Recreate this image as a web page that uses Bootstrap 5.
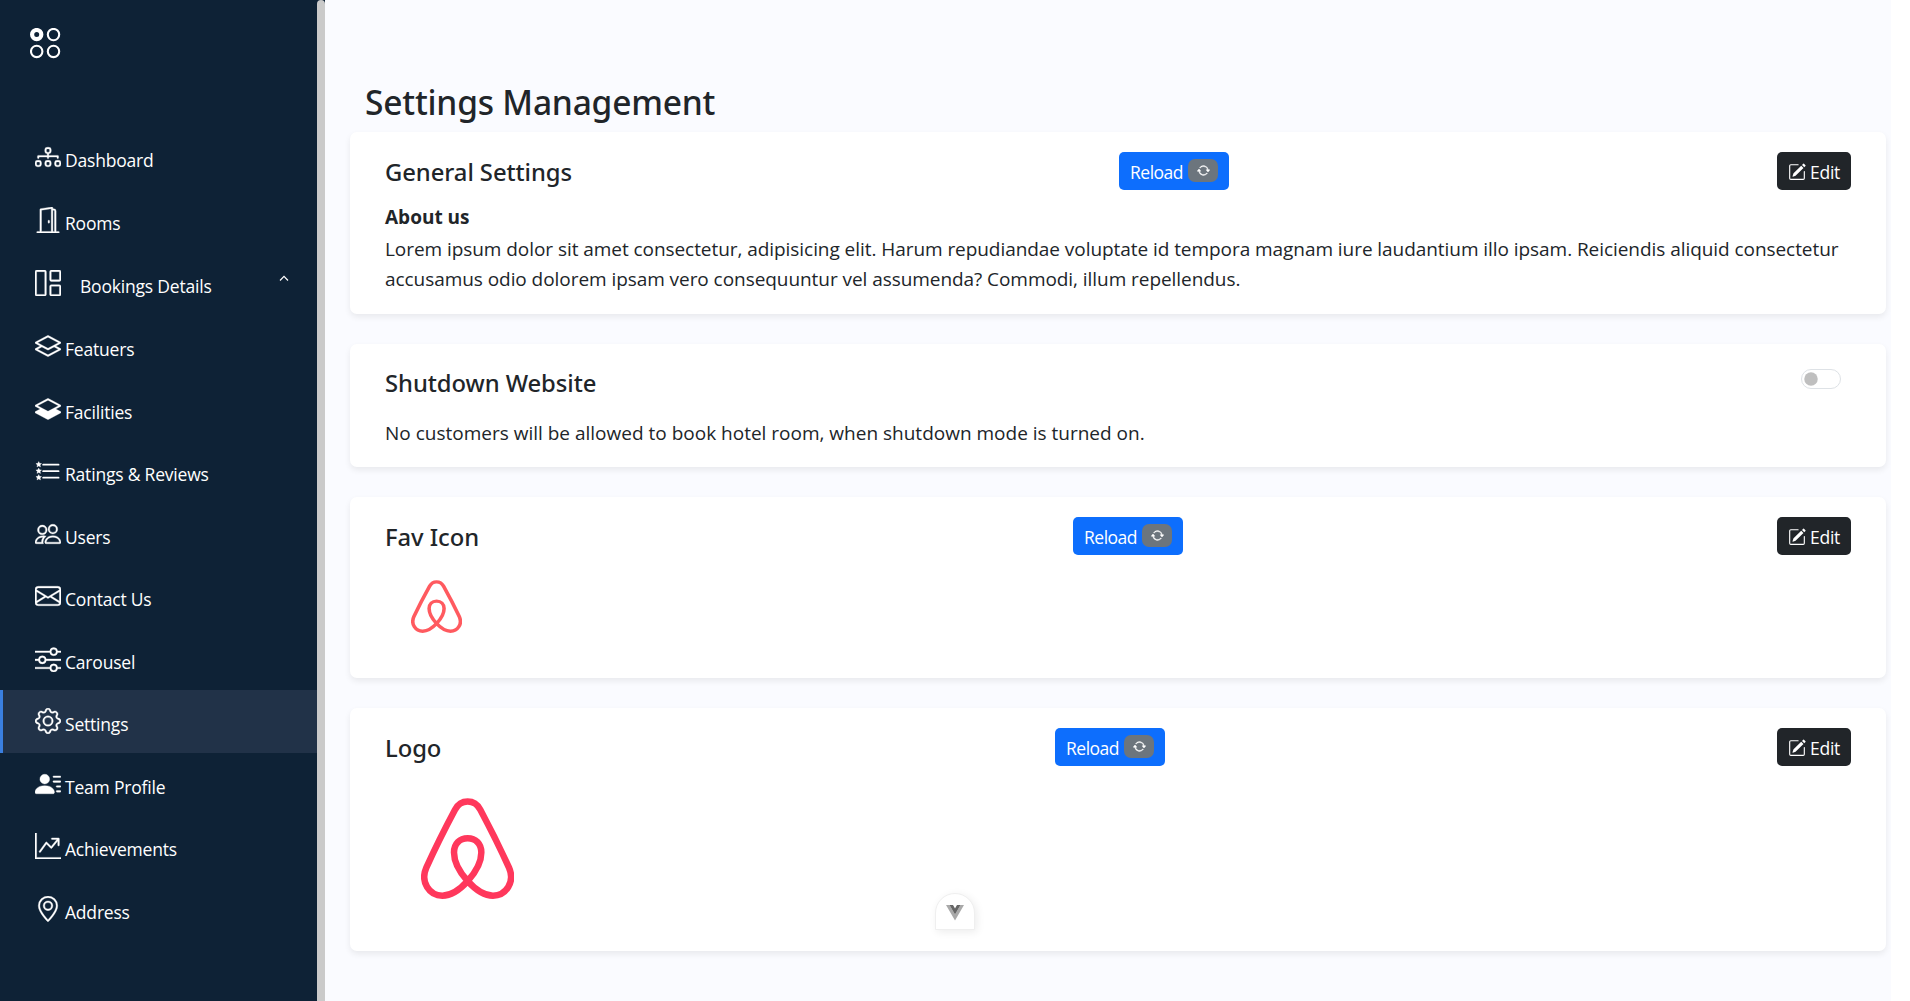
<!DOCTYPE html>
<html lang="en">
<head>
<meta charset="utf-8">
<title>Settings Management</title>
<link href="https://cdn.jsdelivr.net/npm/bootstrap@5.3.0/dist/css/bootstrap.min.css" rel="stylesheet">
<style>
body{font-family:"Open Sans","Noto Sans",sans-serif;font-size:19px;line-height:30px;color:#212529;height:1001px;overflow:hidden}
svg{display:block;flex:none}
.side-panel{width:317px;background:#0e2236}
.side-thumb{width:8px;background:#0e2236}
.side-thumb div{background:#cacaca;border-radius:4px 4px 0 0}
.side-brand{height:126px;padding:28px 0 0 30px}
.side-link{height:62.5px;padding:18.4px 0 0 35px;color:#fff;font-size:17.5px;letter-spacing:-.2px;text-decoration:none;gap:4px}
.side-link svg{stroke:currentColor;stroke-width:.2}
.side-link span{line-height:26px;padding-top:3px;white-space:nowrap}
.side-link.tall{height:64px;gap:19px;padding-top:19.4px}
.side-link.tall .caret{margin:4px 28px 0 auto;stroke-width:1.2}
.side-link.on{background:#213248;box-shadow:inset 3px 0 #3a7fdf}
.page{width:1566px;background:#fafbff;padding:82px 5px 0 25px}
h2{font:500 33.5px/40px "Noto Sans",sans-serif;letter-spacing:-.2px;margin:0 0 10px 15px}
.panel{border:0;border-radius:7px;margin-bottom:30px;padding:20px 35px;box-shadow:0 3px 6px rgba(0,0,0,.075)}
.panel h5{font:500 23.8px/38px "Noto Sans",sans-serif;letter-spacing:-.06px;margin:1px 0 0;white-space:nowrap}
.panel p{margin:0}
.w-general{width:186px}.w-fav{width:94px}.w-logo{width:58px}
.h-general{height:182px}.h-shut{height:123px}.h-fav{height:181px}.h-logo{height:243px}
.panel .btn{height:38px;font-size:17.5px;line-height:24px;padding:1px 11px 0;border:0;border-radius:5px;display:flex;align-items:center}
.btn-reload{width:110px;gap:5px;letter-spacing:-.5px}
.btn-reload .badge{width:31px;height:23px;padding:0;border-radius:7px;display:flex;align-items:center;justify-content:center}
.btn-reload svg{stroke:currentColor;stroke-width:.5}
.panel .btn-edit{width:74px;gap:4px;letter-spacing:-.25px}
.form-switch .form-check-input{width:40px;height:20px;margin:1px 2px 0 0}
.about-title{padding-top:11px}
.about-text{padding-top:2px;letter-spacing:-.057px}
.fav-art{margin:24px 0 0 26px}
.logo-art{margin:31px 0 0 36px}
.vue-tab{position:absolute;left:935px;top:893px;width:40px;height:37px;border:1px solid #efefef;border-radius:20px 20px 0 0;background:#fff;box-shadow:2px 2px 8px rgba(0,0,0,.08);padding:11px 0 0 10px}
</style>
</head>
<body class="d-flex position-relative bg-white">
<svg width="0" height="0" class="position-absolute">
<symbol id="diagram" viewBox="0 0 16 16"><path fill-rule="evenodd" d="M6 3.5A1.5 1.5 0 0 1 7.5 2h1A1.5 1.5 0 0 1 10 3.5v1A1.5 1.5 0 0 1 8.5 6v1H14a.5.5 0 0 1 .5.5v1a.5.5 0 0 1-1 0V8h-5v.5a.5.5 0 0 1-1 0V8h-5v.5a.5.5 0 0 1-1 0v-1A.5.5 0 0 1 2 7h5.500V6A1.500 1.500 0 0 1 6 4.500v-1zM8.500 5a.5.5 0 0 0 .5-.5v-1a.5.5 0 0 0-.5-.5h-1a.5.5 0 0 0-.5.5v1a.5.5 0 0 0 .5.5h1zM0 11.500A1.500 1.500 0 0 1 1.500 10h1A1.500 1.500 0 0 1 4 11.500v1A1.500 1.500 0 0 1 2.500 14h-1A1.500 1.500 0 0 1 0 12.500v-1zm1.500-.5a.5.5 0 0 0-.5.5v1a.5.5 0 0 0 .5.5h1a.5.5 0 0 0 .5-.5v-1a.5.5 0 0 0-.5-.5h-1zm4.500.5A1.500 1.500 0 0 1 7.500 10h1a1.500 1.500 0 0 1 1.500 1.500v1A1.500 1.500 0 0 1 8.500 14h-1A1.500 1.500 0 0 1 6 12.500v-1zm1.500-.5a.5.5 0 0 0-.5.5v1a.5.5 0 0 0 .5.5h1a.5.5 0 0 0 .5-.5v-1a.5.5 0 0 0-.5-.5h-1zm4.500.5a1.500 1.500 0 0 1 1.500-1.500h1a1.500 1.500 0 0 1 1.500 1.500v1a1.500 1.500 0 0 1-1.500 1.500h-1a1.500 1.500 0 0 1-1.500-1.500v-1zm1.500-.5a.5.5 0 0 0-.5.5v1a.5.5 0 0 0 .5.5h1a.5.5 0 0 0 .5-.5v-1a.5.5 0 0 0-.5-.5h-1z"/></symbol>
<symbol id="door" viewBox="0 0 16 16"><path d="M8.500 10c-.276 0-.5-.448-.5-1s.224-1 .5-1 .5.448.5 1-.224 1-.5 1z"/><path d="M10.828.122A.5.5 0 0 1 11 .5V1h.5A1.500 1.500 0 0 1 13 2.500V15h1.500a.5.5 0 0 1 0 1h-13a.5.5 0 0 1 0-1H3V1.500a.5.5 0 0 1 .43-.495l7-1a.5.5 0 0 1 .398.117zM11.500 2H11v13h1V2.500a.5.5 0 0 0-.5-.5zM4 1.934V15h6V1.077l-6 .857z"/></symbol>
<symbol id="columns" viewBox="0 0 16 16"><path d="M6 1v14H1V1h5zm9 0v5h-5V1h5zm0 9v5h-5v-5h5zM0 1v14a1 1 0 0 0 1 1h5a1 1 0 0 0 1-1V1a1 1 0 0 0-1-1H1a1 1 0 0 0-1 1zm9 0v5a1 1 0 0 0 1 1h5a1 1 0 0 0 1-1V1a1 1 0 0 0-1-1h-5a1 1 0 0 0-1 1zm1 8a1 1 0 0 0-1 1v5a1 1 0 0 0 1 1h5a1 1 0 0 0 1-1v-5a1 1 0 0 0-1-1h-5z"/></symbol>
<symbol id="layers" viewBox="0 0 16 16"><path d="M8.235 1.559a.5.5 0 0 0-.47 0l-7.500 4a.5.5 0 0 0 0 .882L3.188 8 .264 9.559a.5.5 0 0 0 0 .882l7.500 4a.5.5 0 0 0 .47 0l7.500-4a.5.5 0 0 0 0-.882L12.813 8l2.922-1.559a.5.5 0 0 0 0-.882l-7.500-4zm3.515 7.008L14.438 10 8 13.433 1.562 10 4.250 8.567l3.515 1.874a.5.5 0 0 0 .47 0l3.515-1.874zM8 9.433 1.562 6 8 2.567 14.438 6 8 9.433z"/></symbol>
<symbol id="layershalf" viewBox="0 0 16 16"><path d="M8.235 1.559a.5.5 0 0 0-.47 0l-7.500 4a.5.5 0 0 0 0 .882L3.188 8 .264 9.559a.5.5 0 0 0 0 .882l7.500 4a.5.5 0 0 0 .47 0l7.500-4a.5.5 0 0 0 0-.882L12.813 8l2.922-1.559a.5.5 0 0 0 0-.882l-7.500-4zM8 9.433 1.562 6 8 2.567 14.438 6 8 9.433z"/></symbol>
<symbol id="stars" viewBox="0 0 16 16"><path d="M5 4.100h9.500M5 8.100h9.500M5 12.100h9.500" stroke="currentColor" stroke-width="1.100" stroke-linecap="round"/><path id="st" d="M2.300 2.200l.55 1.100 1.200.15-.9.850.25 1.200-1.100-.6-1.100.6.250-1.200-.9-.850 1.200-.15z"/><use href="#st" y="4"/><use href="#st" y="8"/></symbol>
<symbol id="people" viewBox="0 0 16 16"><path d="M15 14s1 0 1-1-1-4-5-4-5 3-5 4 1 1 1 1h8zm-7.978-1A.261.261 0 0 1 7 12.996c.001-.264.167-1.030.760-1.720C8.312 10.629 9.282 10 11 10c1.717 0 2.687.630 3.240 1.276.593.690.758 1.457.760 1.720l-.008.002a.274.274 0 0 1-.014.002H7.022zM11 7a2 2 0 1 0 0-4 2 2 0 0 0 0 4zm3-2a3 3 0 1 1-6 0 3 3 0 0 1 6 0zM6.936 9.280a5.880 5.880 0 0 0-1.230-.247A7.350 7.350 0 0 0 5 9c-4 0-5 3-5 4 0 .667.333 1 1 1h4.216A2.238 2.238 0 0 1 5 13c0-1.010.377-2.042 1.090-2.904.243-.294.526-.569.846-.816zM4.920 10A5.493 5.493 0 0 0 4 13H1c0-.260.164-1.030.760-1.724.545-.636 1.492-1.256 3.160-1.275zM1.500 5.500a3 3 0 1 1 6 0 3 3 0 0 1-6 0zm3-2a2 2 0 1 0 0 4 2 2 0 0 0 0-4z"/></symbol>
<symbol id="mail" viewBox="0 0 16 16"><path d="M0 4a2 2 0 0 1 2-2h12a2 2 0 0 1 2 2v8a2 2 0 0 1-2 2H2a2 2 0 0 1-2-2V4zm2-1a1 1 0 0 0-1 1v.217l7 4.200 7-4.200V4a1 1 0 0 0-1-1H2zm13 2.383-4.708 2.825L15 11.105V5.383zm-.034 6.876-5.640-3.471L8 9.583l-1.326-.795-5.640 3.470A1 1 0 0 0 2 13h12a1 1 0 0 0 .966-.741zM1 11.105l4.708-2.897L1 5.383v5.722z"/></symbol>
<symbol id="sliders" viewBox="0 0 16 16"><path fill-rule="evenodd" d="M11.500 2a1.500 1.500 0 1 0 0 3 1.500 1.500 0 0 0 0-3zM9.050 3a2.500 2.500 0 0 1 4.900 0H16v1h-2.050a2.500 2.500 0 0 1-4.900 0H0V3h9.050zM4.500 7a1.500 1.500 0 1 0 0 3 1.500 1.500 0 0 0 0-3zM2.050 8a2.500 2.500 0 0 1 4.900 0H16v1H6.950a2.500 2.500 0 0 1-4.900 0H0V8h2.050zm9.450 4a1.500 1.500 0 1 0 0 3 1.500 1.500 0 0 0 0-3zm-2.450 1a2.500 2.500 0 0 1 4.900 0H16v1h-2.050a2.500 2.500 0 0 1-4.900 0H0v-1h9.050z"/></symbol>
<symbol id="gear" viewBox="0 0 16 16"><path d="M8 4.754a3.246 3.246 0 1 0 0 6.492 3.246 3.246 0 0 0 0-6.492zM5.754 8a2.246 2.246 0 1 1 4.492 0 2.246 2.246 0 0 1-4.492 0z"/><path d="M9.796 1.343c-.527-1.790-3.065-1.790-3.592 0l-.094.319a.873.873 0 0 1-1.255.520l-.292-.160c-1.640-.892-3.433.902-2.540 2.541l.159.292a.873.873 0 0 1-.520 1.255l-.319.094c-1.790.527-1.790 3.065 0 3.592l.319.094a.873.873 0 0 1 .520 1.255l-.160.292c-.892 1.640.901 3.434 2.541 2.540l.292-.159a.873.873 0 0 1 1.255.520l.094.319c.527 1.790 3.065 1.790 3.592 0l.094-.319a.873.873 0 0 1 1.255-.520l.292.160c1.640.893 3.434-.902 2.540-2.541l-.159-.292a.873.873 0 0 1 .520-1.255l.319-.094c1.790-.527 1.790-3.065 0-3.592l-.319-.094a.873.873 0 0 1-.520-1.255l.160-.292c.893-1.640-.902-3.433-2.541-2.540l-.292.159a.873.873 0 0 1-1.255-.520l-.094-.319zm-2.633.283c.246-.835 1.428-.835 1.674 0l.094.319a1.873 1.873 0 0 0 2.693 1.115l.291-.160c.764-.415 1.600.420 1.184 1.185l-.159.292a1.873 1.873 0 0 0 1.116 2.692l.318.094c.835.246.835 1.428 0 1.674l-.319.094a1.873 1.873 0 0 0-1.115 2.693l.160.291c.415.764-.420 1.600-1.185 1.184l-.291-.159a1.873 1.873 0 0 0-2.693 1.116l-.094.318c-.246.835-1.428.835-1.674 0l-.094-.319a1.873 1.873 0 0 0-2.692-1.115l-.292.160c-.764.415-1.600-.420-1.184-1.185l.159-.291A1.873 1.873 0 0 0 1.945 8.930l-.319-.094c-.835-.246-.835-1.428 0-1.674l.319-.094A1.873 1.873 0 0 0 3.060 4.377l-.160-.292c-.415-.764.420-1.600 1.185-1.184l.292.159a1.873 1.873 0 0 0 2.692-1.115l.094-.319z"/></symbol>
<symbol id="personlines" viewBox="0 0 16 16"><path d="M6 8a3 3 0 1 0 0-6 3 3 0 0 0 0 6zm-5 6s-1 0-1-1 1-4 6-4 6 3 6 4-1 1-1 1H1zM11 3.500a.5.5 0 0 1 .5-.5h4a.5.5 0 0 1 0 1h-4a.5.5 0 0 1-.5-.5zm.5 2.500a.5.5 0 0 0 0 1h4a.5.5 0 0 0 0-1h-4zm2 3a.5.5 0 0 0 0 1h2a.5.5 0 0 0 0-1h-2zm0 3a.5.5 0 0 0 0 1h2a.5.5 0 0 0 0-1h-2z"/></symbol>
<symbol id="graph" viewBox="0 0 16 16"><path fill-rule="evenodd" d="M0 0h1v15h15v1H0V0zm10 3.500a.5.5 0 0 1 .5-.5h4a.5.5 0 0 1 .5.5v4a.5.5 0 0 1-1 0V4.900l-3.613 4.417a.5.5 0 0 1-.740.037L7.060 6.767l-3.656 5.027a.5.5 0 0 1-.808-.588l4-5.500a.5.5 0 0 1 .758-.060l2.609 2.610L13.445 4H10.500a.5.5 0 0 1-.5-.5z"/></symbol>
<symbol id="geo" viewBox="0 0 16 16"><path d="M12.166 8.940c-.524 1.062-1.234 2.120-1.960 3.070A31.493 31.493 0 0 1 8 14.580a31.481 31.481 0 0 1-2.206-2.570c-.726-.950-1.436-2.008-1.960-3.070C3.304 7.867 3 6.862 3 6a5 5 0 0 1 10 0c0 .862-.305 1.867-.834 2.940zM8 16s6-5.686 6-10A6 6 0 0 0 2 6c0 4.314 6 10 6 10z"/><path d="M8 8a2 2 0 1 1 0-4 2 2 0 0 1 0 4zm0 1a3 3 0 1 0 0-6 3 3 0 0 0 0 6z"/></symbol>
<symbol id="reload" viewBox="0 0 16 16"><path d="M11.534 7h3.932a.250.250 0 0 1 .192.410l-1.966 2.360a.250.250 0 0 1-.384 0l-1.966-2.360a.250.250 0 0 1 .192-.410zm-11 2h3.932a.250.250 0 0 0 .192-.410L2.692 6.230a.250.250 0 0 0-.384 0L.342 8.590A.250.250 0 0 0 .534 9z"/><path fill-rule="evenodd" d="M8 3c-1.552 0-2.940.707-3.857 1.818a.5.5 0 1 1-.771-.636A6.002 6.002 0 0 1 13.917 7H12.900A5.002 5.002 0 0 0 8 3zM3.100 9a5.002 5.002 0 0 0 8.757 2.182.5.5 0 1 1 .771.636A6.002 6.002 0 0 1 2.083 9H3.100z"/></symbol>
<symbol id="pencil" viewBox="0 0 16 16"><path d="M15.502 1.940a.5.5 0 0 1 0 .706L14.459 3.690l-2-2L13.502.646a.5.5 0 0 1 .707 0l1.293 1.293zm-1.750 2.456-2-2L4.939 9.210a.5.5 0 0 0-.121.196l-.805 2.414a.250.250 0 0 0 .316.316l2.414-.805a.5.5 0 0 0 .196-.120l6.813-6.814z"/><path fill-rule="evenodd" d="M1 13.500A1.500 1.500 0 0 0 2.500 15h11a1.500 1.500 0 0 0 1.500-1.500v-6a.5.5 0 0 0-1 0v6a.5.5 0 0 1-.5.5h-11a.5.5 0 0 1-.5-.5v-11a.5.5 0 0 1 .5-.5H9a.5.5 0 0 0 0-1H2.500A1.500 1.500 0 0 0 1 2.500v11z"/></symbol>
<symbol id="bnb" viewBox="243 324 279 302" preserveAspectRatio="none"><path fill="none" stroke="currentColor" stroke-width="19.500" stroke-linejoin="round" d="M383 334.500C364 334.500 354 342 345 359C315 415 285 475 259 532C240 575 268 616 307 616C356 616 424 540 424 487C424 461 407 444.500 383 444.500C359 444.500 342 461 342 487C342 540 410 616 459 616C498 616 526 575 507 532C481 475 451 415 421 359C412 342 402 334.500 383 334.500Z"/></symbol>
</svg>

<aside class="side-panel flex-shrink-0">
  <div class="side-brand">
    <svg width="31" height="31" fill="none" stroke="#fff" stroke-width="2.100"><circle cx="6.700" cy="6.600" r="4.600" stroke-width="4.200"/><circle cx="23.500" cy="6.600" r="5.700"/><circle cx="6.700" cy="23.400" r="5.700"/><circle cx="23.500" cy="23.400" r="5.700"/></svg>
  </div>
  <nav>
    <a class="side-link d-flex align-items-start"><svg width="26" height="26" fill="currentColor"><use href="#diagram"/></svg><span>Dashboard</span></a>
    <a class="side-link d-flex align-items-start"><svg width="26" height="26" fill="currentColor"><use href="#door"/></svg><span>Rooms</span></a>
    <a class="side-link tall d-flex align-items-start"><svg width="26" height="26" fill="currentColor"><use href="#columns"/></svg><span>Bookings Details</span><svg class="caret" width="10" height="8" fill="none"><path d="M1 6.500 5 2.300 9 6.500"/></svg></a>
    <a class="side-link d-flex align-items-start"><svg width="26" height="26" fill="currentColor"><use href="#layers"/></svg><span>Featuers</span></a>
    <a class="side-link d-flex align-items-start"><svg width="26" height="26" fill="currentColor"><use href="#layershalf"/></svg><span>Facilities</span></a>
    <a class="side-link d-flex align-items-start"><svg width="26" height="26" fill="currentColor"><use href="#stars"/></svg><span>Ratings &amp; Reviews</span></a>
    <a class="side-link d-flex align-items-start"><svg width="26" height="26" fill="currentColor"><use href="#people"/></svg><span>Users</span></a>
    <a class="side-link d-flex align-items-start"><svg width="26" height="26" fill="currentColor"><use href="#mail"/></svg><span>Contact Us</span></a>
    <a class="side-link d-flex align-items-start"><svg width="26" height="26" fill="currentColor"><use href="#sliders"/></svg><span>Carousel</span></a>
    <a class="side-link on d-flex align-items-start"><svg width="26" height="26" fill="currentColor"><use href="#gear"/></svg><span>Settings</span></a>
    <a class="side-link d-flex align-items-start"><svg width="26" height="26" fill="currentColor"><use href="#personlines"/></svg><span>Team Profile</span></a>
    <a class="side-link d-flex align-items-start"><svg width="26" height="26" fill="currentColor"><use href="#graph"/></svg><span>Achievements</span></a>
    <a class="side-link d-flex align-items-start"><svg width="26" height="26" fill="currentColor"><use href="#geo"/></svg><span>Address</span></a>
  </nav>
</aside>
<div class="side-thumb flex-shrink-0"><div class="h-100"></div></div>

<main class="page flex-shrink-0">
  <h2>Settings Management</h2>
  <section class="card panel h-general">
    <div class="d-flex justify-content-between align-items-start">
      <h5 class="w-general">General Settings</h5>
      <button class="btn btn-primary btn-reload">Reload<span class="badge text-bg-secondary"><svg width="13" height="13" fill="currentColor"><use href="#reload"/></svg></span></button>
      <button class="btn btn-dark btn-edit"><svg width="18" height="18" fill="currentColor"><use href="#pencil"/></svg>Edit</button>
    </div>
    <p class="fw-bold about-title">About us</p>
    <p class="about-text">Lorem ipsum dolor sit amet consectetur, adipisicing elit. Harum repudiandae voluptate id tempora magnam iure laudantium illo ipsam. Reiciendis aliquid consectetur<br>accusamus odio dolorem ipsam vero consequuntur vel assumenda? Commodi, illum repellendus.</p>
  </section>
  <section class="card panel h-shut">
    <div class="d-flex justify-content-between align-items-start">
      <h5 class="mt-0">Shutdown Website</h5>
      <div class="form-check form-switch p-0 m-0 me-2 pt-1"><input class="form-check-input d-block" type="checkbox"></div>
    </div>
    <p class="pt-3">No customers will be allowed to book hotel room, when shutdown mode is turned on.</p>
  </section>
  <section class="card panel h-fav">
    <div class="d-flex justify-content-between align-items-start">
      <h5 class="w-fav">Fav Icon</h5>
      <button class="btn btn-primary btn-reload">Reload<span class="badge text-bg-secondary"><svg width="13" height="13" fill="currentColor"><use href="#reload"/></svg></span></button>
      <button class="btn btn-dark btn-edit"><svg width="18" height="18" fill="currentColor"><use href="#pencil"/></svg>Edit</button>
    </div>
    <svg class="fav-art" width="51" height="53" color="#ff5a5f"><use href="#bnb"/></svg>
  </section>
  <section class="card panel h-logo">
    <div class="d-flex justify-content-between align-items-start">
      <h5 class="w-logo">Logo</h5>
      <button class="btn btn-primary btn-reload">Reload<span class="badge text-bg-secondary"><svg width="13" height="13" fill="currentColor"><use href="#reload"/></svg></span></button>
      <button class="btn btn-dark btn-edit"><svg width="18" height="18" fill="currentColor"><use href="#pencil"/></svg>Edit</button>
    </div>
    <svg class="logo-art" width="93" height="101" color="#ff385c"><use href="#bnb"/></svg>
  </section>
</main>
<div class="vue-tab"><svg width="18" height="16"><path fill="#a9a9a9" d="M0 0h3.500L9 9.500 14.500 0H18L9 15.500z"/><path fill="#666" d="M3.500 0H7l2 3.500L11 0h3.500L9 9.500z"/></svg></div>
<script src="https://cdn.jsdelivr.net/npm/bootstrap@5.3.0/dist/js/bootstrap.bundle.min.js"></script>
</body>
</html>
